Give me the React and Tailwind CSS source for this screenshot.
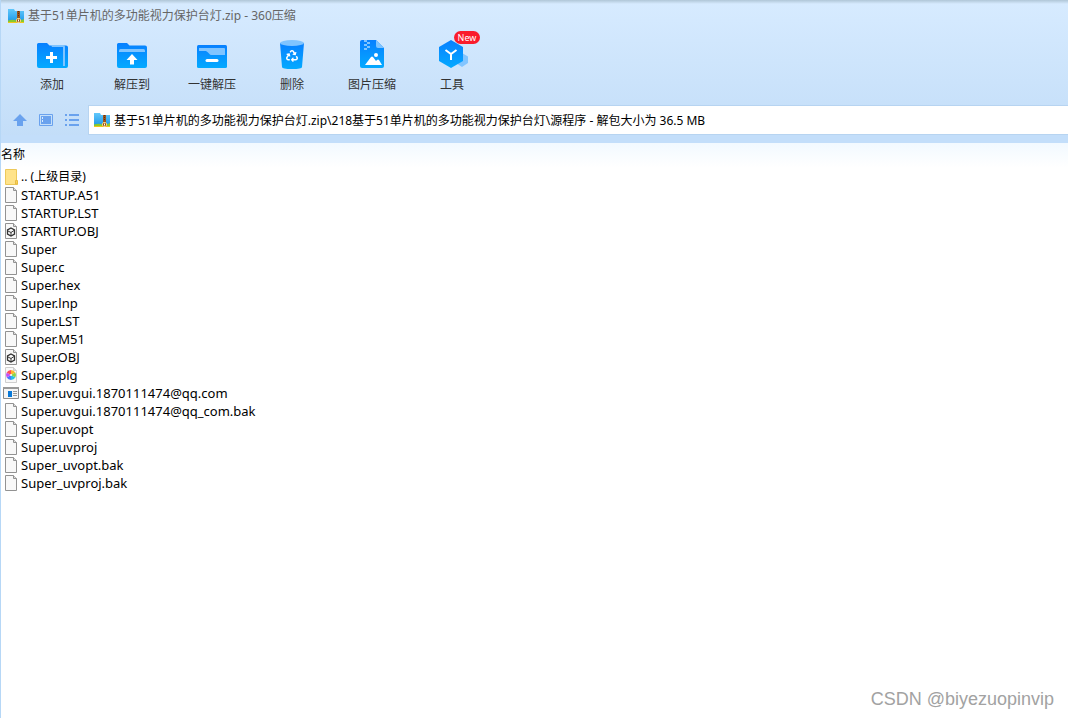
import React from 'react';
import { FaRecycle } from 'react-icons/fa';

const files = [
  { name: '.. (上级目录)', type: 'folder' },
  { name: 'STARTUP.A51', type: 'file' },
  { name: 'STARTUP.LST', type: 'file' },
  { name: 'STARTUP.OBJ', type: 'obj' },
  { name: 'Super', type: 'file' },
  { name: 'Super.c', type: 'file' },
  { name: 'Super.hex', type: 'file' },
  { name: 'Super.lnp', type: 'file' },
  { name: 'Super.LST', type: 'file' },
  { name: 'Super.M51', type: 'file' },
  { name: 'Super.OBJ', type: 'obj' },
  { name: 'Super.plg', type: 'plg' },
  { name: 'Super.uvgui.1870111474@qq.com', type: 'app' },
  { name: 'Super.uvgui.1870111474@qq_com.bak', type: 'file' },
  { name: 'Super.uvopt', type: 'file' },
  { name: 'Super.uvproj', type: 'file' },
  { name: 'Super_uvopt.bak', type: 'file' },
  { name: 'Super_uvproj.bak', type: 'file' },
];

const ZipIcon = () => (
  <svg width="16" height="16" viewBox="0 0 16 16" className="shrink-0" aria-hidden="true">
    <defs>
      <linearGradient id="zipBlue" x1="0" y1="0" x2="0" y2="1">
        <stop offset="0" stopColor="#62c8fb" />
        <stop offset="1" stopColor="#219bea" />
      </linearGradient>
    </defs>
    <path d="M0 1h6l1 2h9v10H0z" fill="url(#zipBlue)" />
    <path d="M0 12.500q5-1.500 8 0 4 1 8-1.500V15H0z" fill="#8ac92c" />
    <path d="M0 14h16v1H0z" fill="#f0c51c" />
    <path d="M9 3h3v12H9z" fill="#9a5420" />
    <path d="M10.500 3v6" stroke="#5d3012" strokeDasharray="1 1" />
    <rect x="8.500" y="10.500" width="4" height="4" rx="1.500" fill="#8a4a19" stroke="#ffd575" />
    <path d="M10.500 11.500v2" stroke="#fff" />
  </svg>
);

const FileIcon = ({ type }) => {
  if (type === 'folder') {
    return (
      <svg width="16" height="16" viewBox="0 0 16 16" aria-hidden="true">
        <path d="M2.500 .5h11v11l1 1v3h-12z" fill="#ffe38a" stroke="#edc95a" />
        <path d="M12.500 15v-3.500h2V15z" fill="#fbd35d" stroke="#e8bd43" />
      </svg>
    );
  }
  if (type === 'app') {
    return (
      <svg width="16" height="16" viewBox="0 0 16 16" aria-hidden="true">
        <path d="M.5 2.500h15v11H.5z" fill="#f5f5f5" stroke="#8c8c8c" />
        <path d="M0 2h16v2H0z" fill="#9a9a9a" />
        <path d="M5 6h4v6H5z" fill="#0878d7" />
        <path d="M10 6.500h4M10 8.500h4M10 10.500h4" stroke="#999" />
      </svg>
    );
  }
  return (
    <svg width="16" height="16" viewBox="0 0 16 16" aria-hidden="true">
      <path d="M2.500 .5h8l3 3v12h-11z" fill="#f8f8f8" stroke={type === 'plg' ? '#cfcfcf' : '#929292'} />
      <path d="M10.500 .5v3h3" fill="#ddd" stroke={type === 'plg' ? '#cfcfcf' : '#929292'} />
      {type === 'obj' && (
        <g fill="none" stroke="#333">
          <path d="M8 5l3.500 2v4L8 13l-3.500-2V7z" strokeWidth="1.300" />
          <path d="M5 8l3 1.500 3-2M8 9.500V13" />
        </g>
      )}
      {type === 'plg' && (
        <g>
          <path d="M8 8V3a5 5 0 0 1 4.300 2.500z" fill="#ffb52f" />
          <path d="M8 8l4.300-2.500a5 5 0 0 1 0 5z" fill="#8bd44b" />
          <path d="M8 8l4.300 2.500A5 5 0 0 1 8 13z" fill="#27bdea" />
          <path d="M8 8v5a5 5 0 0 1-4.300-2.500z" fill="#4877ff" />
          <path d="M8 8l-4.300 2.500a5 5 0 0 1 0-5z" fill="#c651f3" />
          <path d="M8 8L3.700 5.500A5 5 0 0 1 8 3z" fill="#ff4b59" />
          <circle cx="8" cy="8" r="1" fill="#fff" />
        </g>
      )}
    </svg>
  );
};

const tools = [
  {
    label: '添加',
    icon: (
      <>
        <path d="M1 4.500Q1 3 2.500 3H11l2.500 2.500H30q2 0 2 2V26q0 2-2 2H3q-2 0-2-2z" fill="url(#toolBlue)" />
        <path d="M15 5h12.500Q29 5 29 7v19h-2V7H16z" fill="#80c4ff" />
        <path d="M15.500 12v11M10 17.500h11" stroke="#fff" strokeWidth="3" />
      </>
    ),
  },
  {
    label: '解压到',
    icon: (
      <>
        <path d="M1 4.500Q1 3 2.500 3H11l2.500 2.500H29q2 0 2 2V26q0 2-2 2H3q-2 0-2-2z" fill="url(#toolBlue)" />
        <path d="M3 12v-1.500Q3 9 4.500 9h23Q29 9 29 10.500V12z" fill="#80c4ff" />
        <path d="M16 14l5.500 6H18v4.500h-4V20h-3.500z" fill="#fff" />
      </>
    ),
  },
  {
    label: '一键解压',
    icon: (
      <>
        <rect x="1" y="5" width="30" height="23" rx="1.500" fill="url(#toolBlue)" />
        <path d="M3 8h25q1 0 1 1v6H15.500Q14 15 13 13.500T10 11H3z" fill="#80c4ff" />
        <path d="M11 20.500h10" stroke="#fff" strokeWidth="3" strokeLinecap="round" />
      </>
    ),
  },
  {
    label: '删除',
    icon: (
      <>
        <path d="M4 3h24l-2 24q0 2-10 2T6 27z" fill="url(#toolBlue)" />
        <ellipse cx="16" cy="3" rx="12" ry="3" fill="#80c4ff" />
        <FaRecycle x="10" y="10" size="12" color="#fff" />
      </>
    ),
  },
  {
    label: '图片压缩',
    icon: (
      <>
        <path d="M6 0h14l8 8v18q0 2-2 2H6q-2 0-2-2V2q0-2 2-2z" fill="url(#toolBlue)" />
        <path d="M20 0l8 8h-6q-2 0-2-2z" fill="#80c4ff" />
        <path d="M8 0h3v2H8zM11 2h3v2h-3zM8 4h3v2H8zM11 6h3v2h-3zM8 8h3v2H8z" fill="#80c4ff" />
        <circle cx="20" cy="15" r="2" fill="#fff" />
        <path d="M9 25l6-8q1-1 2 0l3 4 1-1q1-1 2 0l3 5z" fill="#fff" />
      </>
    ),
  },
  {
    label: '工具',
    badge: 'New',
    icon: (
      <>
        <path d="M26 13l6 3.500v6.500l-6 4-6-4v-6.500z" fill="#82c5ff" />
        <path d="M15 0l12 7v14l-12 7-12-7V7z" fill="url(#toolBlue)" />
        <path d="M9.500 10l5.500 4 5.500-4M15 14v6" fill="none" stroke="#fff" strokeWidth="2" />
      </>
    ),
  },
];

const App = () => {
  return (
    <div className="flex flex-col min-h-screen bg-white text-black text-[12px] border-l border-[#b6d7f6] [font-family:'Noto_Sans','Noto_Sans_CJK_SC',sans-serif]">
      <svg width="0" height="0" className="absolute" aria-hidden="true">
        <defs>
          <linearGradient id="toolBlue" x1="0" y1="0" x2="0" y2="1">
            <stop offset="0" stopColor="#0880ff" />
            <stop offset="1" stopColor="#04aaff" />
          </linearGradient>
        </defs>
      </svg>

      <header className="bg-linear-to-b from-[#d7ebff] to-[#c2ddf8]">
        <div className="h-1 bg-linear-to-b from-[#b0c6d7] to-[#d7ebff]" />
        <div className="flex items-center h-6 pl-[7px] gap-1 text-[#666]">
          <ZipIcon />
          <h1>基于51单片机的多功能视力保护台灯.zip - 360压缩</h1>
        </div>

        <nav className="flex h-[77px] pl-[11px]">
          {tools.map(tool => (
            <button key={tool.label} type="button" className="relative flex flex-col items-center w-20 pt-3 text-[#333]">
              <svg width="32" height="32" viewBox="0 0 32 32" overflow="visible" aria-hidden="true">{tool.icon}</svg>
              <span className="mt-[5px] leading-4">{tool.label}</span>
              {tool.badge && (
                <span className="absolute left-[42px] top-[3px] w-[26px] h-[13px] rounded-full bg-[#fa1c2c] text-white text-[9px] leading-[13px]">
                  {tool.badge}
                </span>
              )}
            </button>
          ))}
        </nav>

        <div className="flex items-center h-[30px] pl-[11px]">
          <div className="flex w-[76px] gap-[10px] text-[#6aa2ee]">
            <button type="button" aria-label="向上">
              <svg width="16" height="16" viewBox="0 0 16 16">
                <path d="M8 2l7 7h-4v5H5V9H1z" fill="currentColor" />
              </svg>
            </button>
            <button type="button" aria-label="预览">
              <svg width="16" height="16" viewBox="0 0 16 16">
                <path d="M1.500 2.500h13v11h-13z" fill="none" stroke="currentColor" />
                <path d="M3 4h10v8H3z" fill="currentColor" />
                <path d="M4 5h1v2H4zM4 8h1v2H4z" fill="#d7ebff" />
              </svg>
            </button>
            <button type="button" aria-label="列表">
              <svg width="16" height="16" viewBox="0 0 16 16">
                <path d="M1 2h2v2H1zM1 7h2v2H1zM1 12h2v2H1zM5 2h10v2H5zM5 7h10v2H5zM5 12h10v2H5z" fill="currentColor" />
              </svg>
            </button>
          </div>
          <label className="flex flex-1 items-center h-[30px] pl-[5px] gap-1 bg-white border-y border-l border-[#b7d4f1]">
            <ZipIcon />
            <input
              type="text"
              aria-label="路径"
              className="flex-1 pt-px outline-none"
              defaultValue="基于51单片机的多功能视力保护台灯.zip\218基于51单片机的多功能视力保护台灯\源程序 - 解包大小为 36.5 MB"
            />
          </label>
        </div>
        <div className="h-2 bg-[#c3defa]" />
      </header>

      <main className="flex-1">
        <table className="w-full border-collapse">
          <thead className="bg-linear-to-b from-[#f2f9ff] to-white">
            <tr>
              <th className="h-[25px] p-0 pb-[2px] text-left font-normal leading-4">名称</th>
            </tr>
          </thead>
          <tbody>
            {files.map(file => (
              <tr key={file.name}>
                <td className="h-[18px] p-0">
                  <div className="flex items-center gap-[2px] pl-[2px] h-[18px] leading-[18px]">
                    <FileIcon type={file.type} />
                    <span className={file.type === 'folder' ? 'text-[12px]' : 'text-[13px]'}>{file.name}</span>
                  </div>
                </td>
              </tr>
            ))}
          </tbody>
        </table>
      </main>

      <div className="absolute right-[14px] bottom-[7px] text-[18px] leading-6 text-[#a2a2a2] [font-family:'Liberation_Sans',sans-serif]">
        CSDN @biyezuopinvip
      </div>
    </div>
  );
};

export default App;
